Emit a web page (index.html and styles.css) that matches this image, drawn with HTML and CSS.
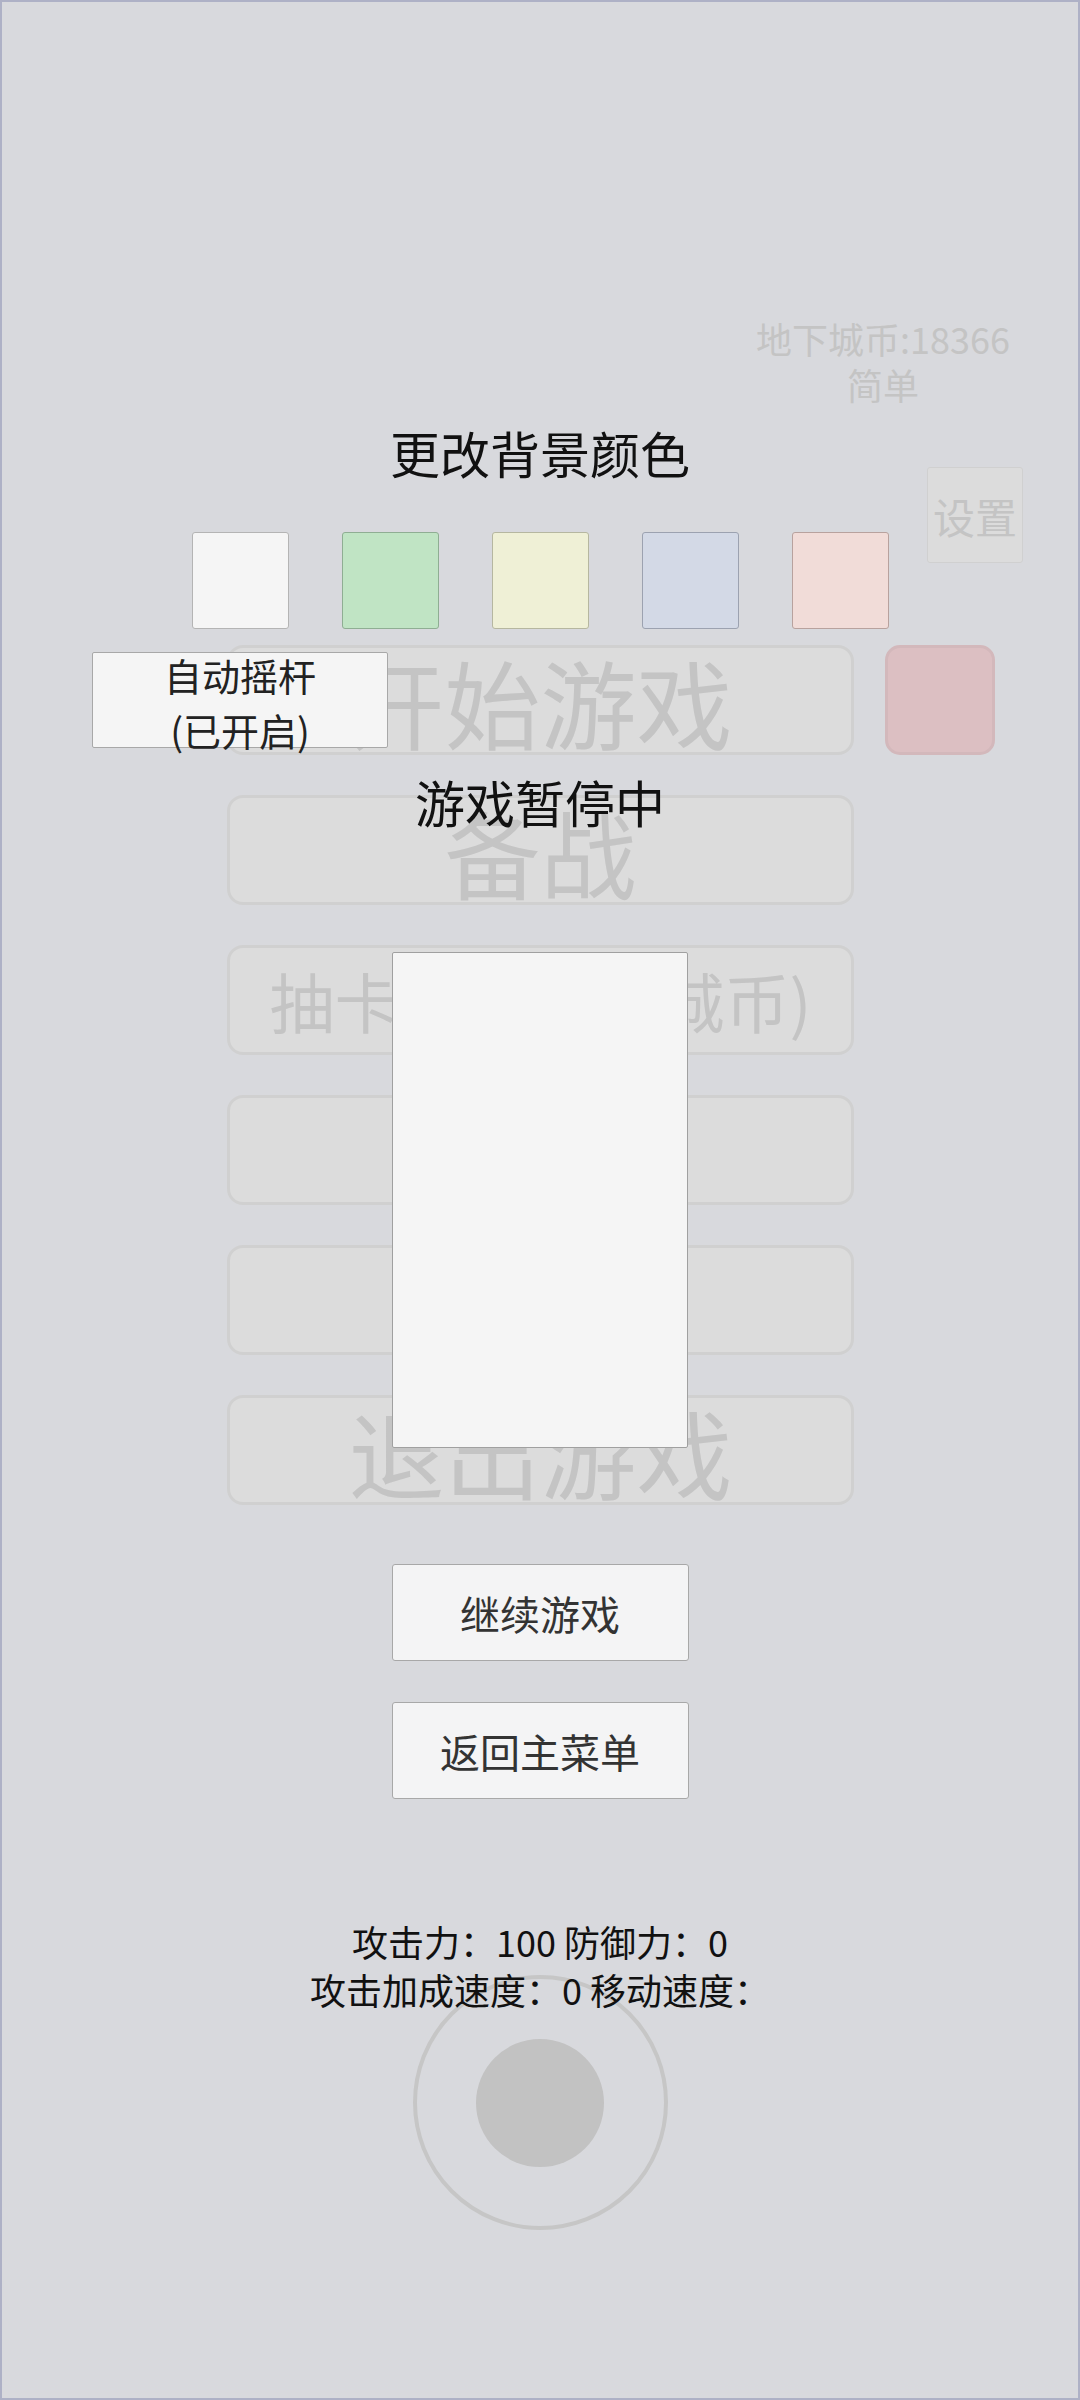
FILE: index.html
```html
<!DOCTYPE html>
<html lang="zh-CN">
<head>
<meta charset="utf-8">
<title>游戏暂停</title>
<link rel="stylesheet" href="styles.css">
</head>
<body>
<div class="screen">
  <div class="layer menu">
    <div class="top-info">
      <div class="coins">地下城币:18366<br>简单</div>
    </div>
    <div class="settings-row">
      <div class="settings">设置</div>
    </div>
    <div class="menu-grid">
      <div class="menu-col">
        <div class="menu-btn">开始游戏</div>
        <div class="menu-btn">备战</div>
        <div class="menu-btn small">抽卡(100地下城币)</div>
        <div class="menu-btn"></div>
        <div class="menu-btn"></div>
        <div class="menu-btn">退出游戏</div>
      </div>
      <div class="red-btn"></div>
    </div>
  </div>

  <div class="layer overlay">
    <div class="title">更改背景颜色</div>
    <div class="swatches">
      <div class="swatch white"></div>
      <div class="swatch green"></div>
      <div class="swatch yellow"></div>
      <div class="swatch blue"></div>
      <div class="swatch pink"></div>
    </div>
    <div class="auto-joy"><span>自动摇杆</span><span>(已开启)</span></div>
    <div class="paused">游戏暂停中</div>
    <div class="panel"></div>
    <div class="action">继续游戏</div>
    <div class="action">返回主菜单</div>
    <div class="stats">
      <div>攻击力：100 防御力：0</div>
      <div>攻击加成速度：0 移动速度：</div>
    </div>
    <div class="joystick"><div class="knob"></div></div>
  </div>
</div>
</body>
</html>
```

FILE: styles.css
```css
* { box-sizing: border-box; }

html, body {
  margin: 0;
  padding: 0;
  background: #d8d9dd;
}

body {
  font-family: "Noto Sans CJK SC", "Noto Sans", sans-serif;
}

.screen {
  position: relative;
  width: 1080px;
  height: 2400px;
  background: #d8d9dd;
  outline: 2px solid #aeb1c6;
  outline-offset: -2px;
  overflow: hidden;
}

.layer {
  position: absolute;
  inset: 0;
}

/* ---------- underlying main menu (faded) ---------- */
.menu {
  padding-top: 315px;
  color: #c4c4c4;
}

.top-info {
  display: flex;
  justify-content: flex-end;
}

.coins {
  width: 394px;
  text-align: center;
  font-size: 36px;
  line-height: 46px;
}

.settings-row {
  display: flex;
  justify-content: flex-end;
  padding-right: 57px;
  margin-top: 60px;
}

.settings {
  width: 96px;
  height: 96px;
  display: flex;
  align-items: center;
  justify-content: center;
  font-size: 42px;
  background: #dcdcdc;
  border: 1px solid #d0d0d0;
  border-radius: 3px;
}

.menu-grid {
  display: grid;
  grid-template-columns: 627px 110px;
  column-gap: 31px;
  align-items: start;
  margin-top: 82px;
  margin-left: 227px;
}

.menu-col {
  display: flex;
  flex-direction: column;
  gap: 40px;
}

.menu-btn {
  height: 110px;
  display: flex;
  align-items: center;
  justify-content: center;
  background: #dcdcdc;
  border: 3px solid #d0d0d0;
  border-radius: 16px;
  font-size: 96px;
  white-space: nowrap;
  overflow: visible;
}

.menu-btn.small {
  font-size: 65px;
}

.red-btn {
  width: 110px;
  height: 110px;
  background: #dcbfc2;
  border: 3px solid #d3b8bb;
  border-radius: 15px;
}

/* ---------- pause overlay ---------- */
.overlay {
  display: flex;
  flex-direction: column;
  align-items: center;
  padding-top: 422px;
}

.title {
  font-size: 50px;
  line-height: 60px;
  color: #111;
}

.swatches {
  display: flex;
  gap: 53px;
  margin-top: 50px;
}

.swatch {
  width: 97px;
  height: 97px;
  border-radius: 3px;
  border: 1px solid #a8a8a8;
}
.swatch.white  { background: #f5f5f5; border-color: #b4b4b4; }
.swatch.green  { background: #c0e4c4; border-color: #8fae93; }
.swatch.yellow { background: #eff0d6; border-color: #b6b7a0; }
.swatch.blue   { background: #d3d9e6; border-color: #9ca2b0; }
.swatch.pink   { background: #f1dcd8; border-color: #b8a29e; }

.auto-joy {
  align-self: flex-start;
  margin-left: 92px;
  margin-top: 23px;
  width: 296px;
  height: 96px;
  padding-top: 4px;
  display: flex;
  flex-direction: column;
  align-items: center;
  justify-content: center;
  background: #f5f5f5;
  border: 1px solid #a8a8a8;
  border-radius: 2px;
  font-size: 38px;
  line-height: 55px;
  color: #222;
  overflow: visible;
}

.paused {
  margin-top: 23px;
  font-size: 50px;
  line-height: 60px;
  color: #111;
}

.panel {
  margin-top: 121px;
  width: 296px;
  height: 496px;
  background: #f5f5f5;
  border: 1px solid #a0a0a0;
  border-radius: 2px;
}

.action {
  width: 297px;
  height: 97px;
  display: flex;
  align-items: center;
  justify-content: center;
  background: #f4f4f5;
  border: 1px solid #a8a8a8;
  border-radius: 3px;
  font-size: 40px;
  color: #333;
}

.panel + .action {
  margin-top: 116px;
}

.action + .action {
  margin-top: 41px;
}

.stats {
  position: relative;
  z-index: 1;
  margin-top: 118px;
  text-align: center;
  font-size: 36px;
  line-height: 48px;
  color: #111;
}

.joystick {
  margin-top: -38px;
  width: 255px;
  height: 255px;
  border: 4px solid #c6c6c6;
  border-radius: 50%;
  display: flex;
  align-items: center;
  justify-content: center;
}

.knob {
  width: 128px;
  height: 128px;
  border-radius: 50%;
  background: #c2c2c2;
}
```
